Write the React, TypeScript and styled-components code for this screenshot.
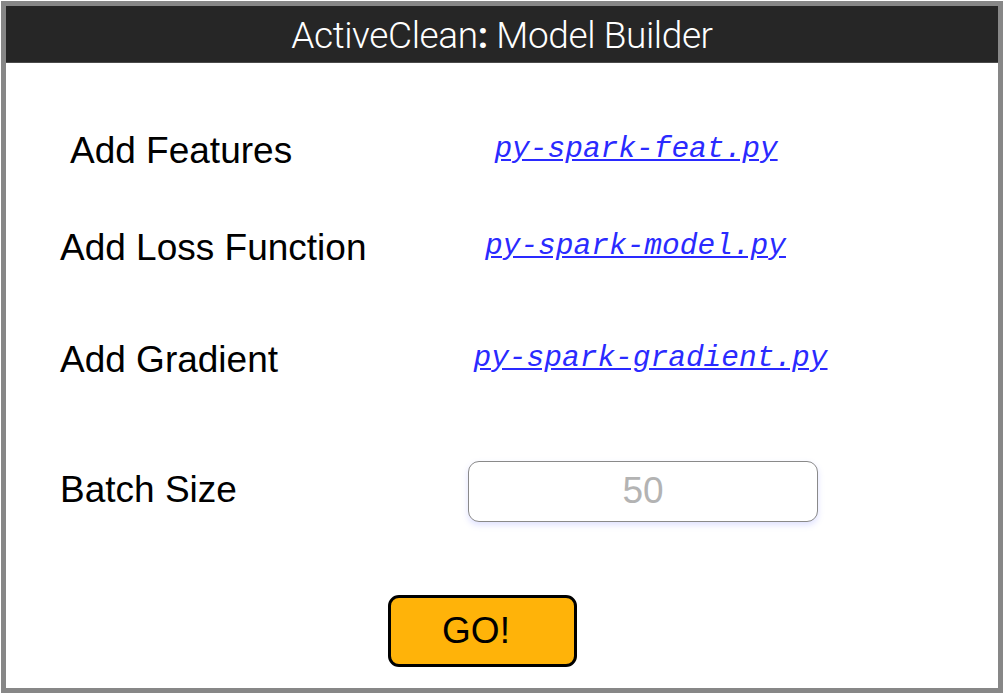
import React from "react";
import styled, { createGlobalStyle } from "styled-components";

const GlobalStyle = createGlobalStyle`
  html, body {
    margin: 0;
    padding: 0;
    background: #ffffff;
  }
  body {
    font-family: "Liberation Sans", Arial, sans-serif;
  }
`;

const Frame = styled.div`
  box-sizing: border-box;
  margin: 1px;
  width: 1002px;
  height: 692px;
  border: 5px solid #878787;
  background: #ffffff;
  display: flex;
  flex-direction: column;
`;

const TitleBar = styled.div`
  height: 57px;
  padding-top: 2px;
  box-sizing: border-box;
  background: #262626;
  border-bottom: 1px solid #4a4a4a;
  display: flex;
  align-items: center;
  justify-content: center;
  color: #ffffff;
  font-family: Roboto, "Liberation Sans", sans-serif;
  font-weight: 300;
  font-size: 37px;
  letter-spacing: -0.4px;

  b {
    font-weight: 700;
  }
`;

const Body = styled.div`
  display: flex;
  flex-direction: column;
  padding-top: 38px;
`;

const Row = styled.div<{ $height: number }>`
  display: grid;
  grid-template-columns: 462px 350px;
  height: ${({ $height }) => $height}px;
  align-items: center;
`;

const Label = styled.div<{ $indent: number }>`
  padding-left: ${({ $indent }) => $indent}px;
  font-size: 37px;
  color: #000000;
`;

const Value = styled.div<{ $shift?: number }>`
  display: flex;
  justify-content: center;
  margin-left: ${({ $shift = 0 }) => $shift}px;
  margin-top: -5px;
`;

const FileLink = styled.a`
  font-family: "Liberation Mono", "Courier New", monospace;
  font-style: italic;
  font-size: 29.5px;
  color: #2a2aff;
  text-decoration: underline;
  white-space: nowrap;
  cursor: pointer;
`;

const SizeInput = styled.input`
  box-sizing: border-box;
  width: 350px;
  height: 61px;
  margin-top: 2px;
  border: 1.5px solid #8a8a8a;
  border-radius: 11px;
  box-shadow: 0 3px 6px rgba(110, 120, 255, 0.22);
  text-align: center;
  font-family: "Liberation Sans", Arial, sans-serif;
  font-size: 37px;
  color: #b3b3b3;
  outline: none;

  &::placeholder {
    color: #b3b3b3;
  }
`;

const Actions = styled.div`
  display: flex;
  justify-content: center;
  padding-top: 40px;
  padding-right: 40px;
`;

const GoButton = styled.button`
  box-sizing: border-box;
  width: 189px;
  height: 72px;
  padding: 0 12px 0 0;
  background: #ffb309;
  border: 3px solid #000000;
  border-radius: 11px;
  font-family: "Liberation Sans", Arial, sans-serif;
  font-size: 37px;
  color: #000000;
  cursor: pointer;
`;

const rows = [
  { label: "Add Features", file: "py-spark-feat.py", indent: 64, shift: -14, height: 100 },
  { label: "Add Loss Function", file: "py-spark-model.py", indent: 54, shift: -15, height: 94 },
  { label: "Add Gradient", file: "py-spark-gradient.py", indent: 54, shift: 15, height: 130 },
];

export default function App() {
  const [batch, setBatch] = React.useState("");
  return (
    <>
      <GlobalStyle />
      <Frame>
        <TitleBar>
          ActiveClean<b>:</b>&nbsp;Model Builder
        </TitleBar>
        <Body>
          {rows.map((r) => (
            <Row key={r.label} $height={r.height}>
              <Label $indent={r.indent}>{r.label}</Label>
              <Value $shift={r.shift}>
                <FileLink>{r.file}</FileLink>
              </Value>
            </Row>
          ))}
          <Row $height={130}>
            <Label $indent={54}>Batch Size</Label>
            <SizeInput
              placeholder="50"
              value={batch}
              onChange={(e) => setBatch(e.target.value)}
            />
          </Row>
          <Actions>
            <GoButton type="button">GO!</GoButton>
          </Actions>
        </Body>
      </Frame>
    </>
  );
}
